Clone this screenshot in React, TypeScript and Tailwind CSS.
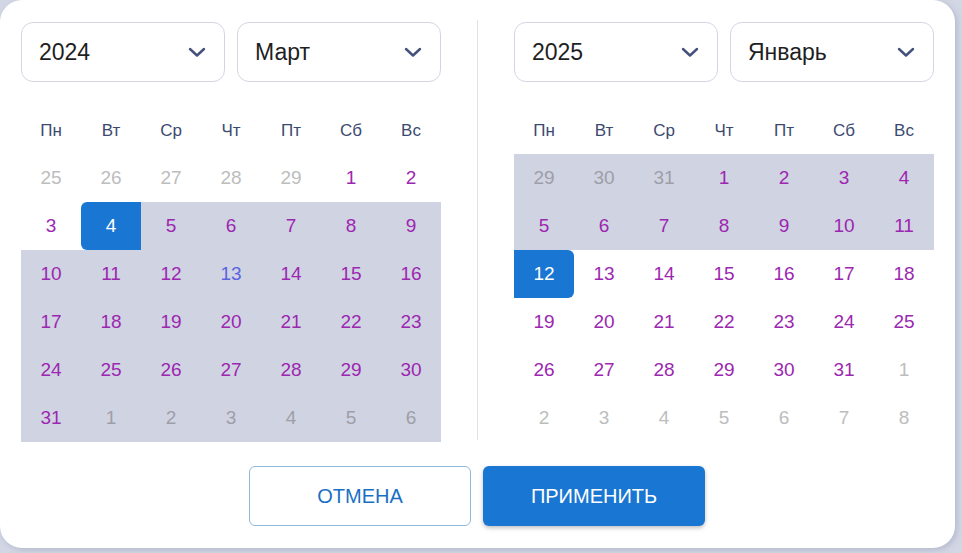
import React from "react";

type Cell = { d: number; kind: "out" | "in" | "today"; range?: boolean; start?: boolean; end?: boolean };

const HEAD = ["Пн", "Вт", "Ср", "Чт", "Пт", "Сб", "Вс"];

function buildLeft(): Cell[] {
  const cells: Cell[] = [];
  [25, 26, 27, 28, 29].forEach((d) => cells.push({ d, kind: "out" }));
  for (let d = 1; d <= 31; d++) {
    cells.push({ d, kind: d === 13 ? "today" : "in", range: d >= 4, start: d === 4 });
  }
  [1, 2, 3, 4, 5, 6].forEach((d) => cells.push({ d, kind: "out", range: true }));
  return cells;
}

function buildRight(): Cell[] {
  const cells: Cell[] = [];
  [29, 30, 31].forEach((d) => cells.push({ d, kind: "out", range: true }));
  for (let d = 1; d <= 31; d++) {
    cells.push({ d, kind: "in", range: d <= 11, end: d === 12 });
  }
  [1, 2, 3, 4, 5, 6, 7, 8].forEach((d) => cells.push({ d, kind: "out" }));
  return cells;
}

function Chevron() {
  return (
    <svg width="18" height="11" viewBox="0 0 18 11" fill="none">
      <path d="M2 2 L9 8.5 L16 2" stroke="#44517a" strokeWidth="2.4" strokeLinecap="round" strokeLinejoin="round" />
    </svg>
  );
}

function Select({ value }: { value: string }) {
  return (
    <div className="flex h-[60px] w-[204px] items-center justify-between rounded-[12px] border border-[#d3d6e2] bg-white pl-[17px] pr-[18px]">
      <span className="text-[23px] text-[#1f1f1f]">{value}</span>
      <Chevron />
    </div>
  );
}

function DayCell({ c }: { c: Cell }) {
  let bg = "";
  let color = "text-[#9c27b0]";
  if (c.kind === "out") color = c.range ? "text-[#9e9ea8]" : "text-[#bdbdbd]";
  if (c.kind === "today") color = "text-[#5b63e0]";
  if (c.range) bg = "bg-[#d0d3e2]";
  if (c.start) {
    bg = "bg-[#1976d2] rounded-l-[6px]";
    color = "text-white";
  }
  if (c.end) {
    bg = "bg-[#1976d2] rounded-r-[6px]";
    color = "text-white";
  }
  return (
    <div className={`flex h-[48px] items-center justify-center text-[19px] ${bg} ${color}`}>{c.d}</div>
  );
}

function Month({ year, month, cells }: { year: string; month: string; cells: Cell[] }) {
  return (
    <div className="flex w-[420px] flex-col">
      <div className="flex gap-[12px]">
        <Select value={year} />
        <Select value={month} />
      </div>
      <div className="mt-[22px] grid h-[50px] grid-cols-7 items-center">
        {HEAD.map((h) => (
          <div key={h} className="pt-[3px] text-center text-[17px] text-[#3d4a70]">
            {h}
          </div>
        ))}
      </div>
      <div className="grid grid-cols-7">
        {cells.map((c, i) => (
          <DayCell key={i} c={c} />
        ))}
      </div>
    </div>
  );
}

export default function App() {
  return (
    <div
      className="h-[553px] w-[962px] overflow-hidden bg-[#d3d7e5]"
      style={{ fontFamily: '"Liberation Sans", Arial, sans-serif' }}
    >
      <div className="flex h-[548px] w-[955px] flex-col rounded-[22px] bg-white pt-[22px] shadow-[2px_2px_6px_rgba(120,128,160,0.35)]">
        <div className="flex pl-[21px]">
          <Month year="2024" month="Март" cells={buildLeft()} />
          <div className="ml-[36px] mr-[36px] mt-[-2px] h-[420px] w-px bg-[#e2e2e6]" />
          <Month year="2025" month="Январь" cells={buildRight()} />
        </div>
        <div className="mt-[24px] flex justify-center gap-[12px] pr-[1px]">
          <button className="flex h-[60px] w-[222px] items-center justify-center rounded-[6px] border border-[#92b9dc] bg-white text-[20px] text-[#1a6fc4]">
            ОТМЕНА
          </button>
          <button className="flex h-[60px] w-[222px] items-center justify-center rounded-[6px] bg-[#1976d2] text-[20px] text-white shadow-[0_2px_4px_rgba(0,0,0,0.25)]">
            ПРИМЕНИТЬ
          </button>
        </div>
      </div>
    </div>
  );
}
